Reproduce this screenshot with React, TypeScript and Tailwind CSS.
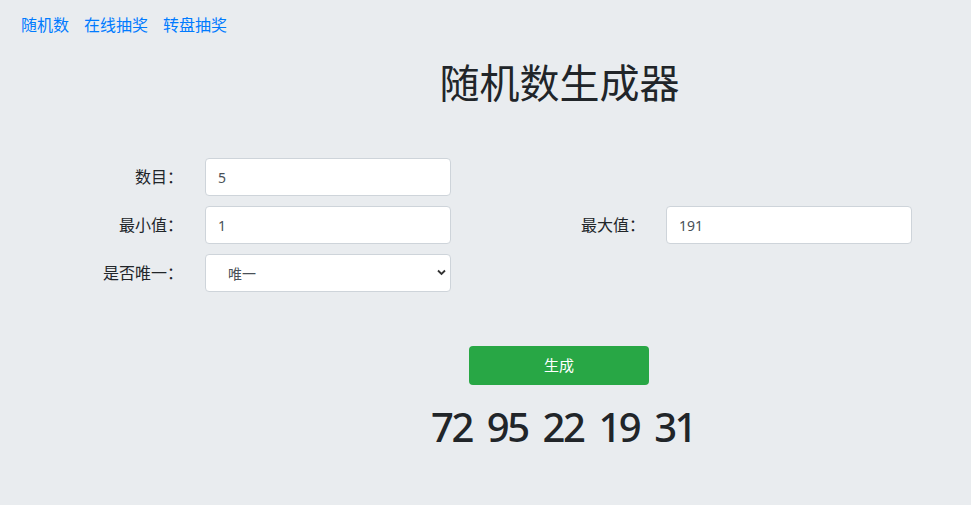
import React from 'react';

const cjk = { fontFamily: '"Segoe UI", "Noto Sans", "Noto Sans CJK SC", sans-serif' };

const numbers = [72, 95, 22, 19, 31];

function Field({ value }: { value: string }) {
  return (
    <input
      readOnly
      value={value}
      className="w-[246px] h-[38px] rounded-[4px] border border-[#ced4da] bg-white px-[12px] text-[14px] text-[#495057] outline-none"
    />
  );
}

export default function App() {
  return (
    <div className="min-h-screen bg-[#e9ecef] text-[#212529]" style={cjk}>
      {/* 导航 */}
      <nav className="flex gap-[15px] pl-[21px] pt-[13px] text-[16px] leading-[24px] text-[#007bff]">
        <a href="#">随机数</a>
        <a href="#">在线抽奖</a>
        <a href="#">转盘抽奖</a>
      </nav>

      <h1 className="mt-[22px] pl-[148px] text-center text-[40px] leading-[48px] font-normal">随机数生成器</h1>

      {/* 表单 */}
      <div className="mt-[51px] flex flex-col gap-[10px] text-[16px]">
        <div className="flex items-center h-[38px]">
          <label className="w-[183px] text-right">数目：</label>
          <div className="ml-[22px]">
            <Field value="5" />
          </div>
        </div>
        <div className="flex items-center h-[38px]">
          <label className="w-[183px] text-right">最小值：</label>
          <div className="ml-[22px]">
            <Field value="1" />
          </div>
          <label className="w-[194px] text-right">最大值：</label>
          <div className="ml-[21px]">
            <Field value="191" />
          </div>
        </div>
        <div className="flex items-center h-[38px]">
          <label className="w-[183px] text-right">是否唯一：</label>
          <div className="ml-[22px] relative w-[246px] h-[38px]">
            <select className="appearance-none w-full h-full rounded-[4px] border border-[#ced4da] bg-white pl-[22px] text-[14px] text-[#495057] outline-none">
              <option>唯一</option>
              <option>不唯一</option>
            </select>
            <svg className="absolute right-[5px] top-[15px] pointer-events-none" width="9" height="7" viewBox="0 0 9 7">
              <path d="M1 1.5 L4.5 5 L8 1.5" fill="none" stroke="#333" strokeWidth="1.8" />
            </svg>
          </div>
        </div>
      </div>

      <div className="mt-[54px] flex justify-center pl-[147px]">
        <button className="w-[180px] h-[39px] rounded-[4px] bg-[#28a745] text-white text-[15px]">生成</button>
      </div>

      {/* 结果 */}
      <div className="mt-[16px] pl-[155px] flex justify-center gap-[15px] text-[40px] leading-[52px] font-medium tracking-[-2.5px]">
        {numbers.map((n, i) => (
          <span key={i}>{n}</span>
        ))}
      </div>
    </div>
  );
}
